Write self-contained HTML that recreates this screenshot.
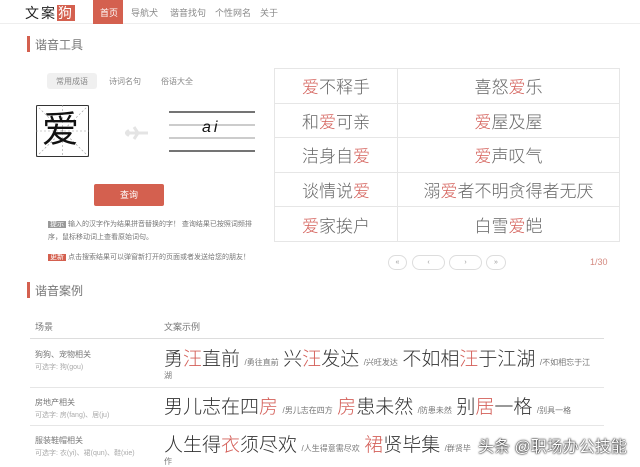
<!DOCTYPE html>
<html><head><meta charset="utf-8"><style>
*{margin:0;padding:0;box-sizing:border-box}
body{width:640px;height:467px;overflow:hidden;background:#fff;font-family:"Liberation Sans","Noto Sans CJK SC",sans-serif;color:#555;position:relative}
.a{position:absolute;white-space:nowrap}
.r{color:#d4605a}
.hdr{left:0;top:0;width:640px;height:24px;border-bottom:1px solid #eee}
.nav{font-size:9px;color:#888;top:6px}
table{border-collapse:collapse}
.t td{border:1px solid #e6e6e6;height:34.6px;font-size:17px;color:#666;text-align:center;font-weight:300}
.pb{top:255px;height:15px;border:1px solid #ddd;border-radius:8px;font-size:7px;color:#999;text-align:center;line-height:13px}
.big{font-size:19px;color:#333;font-weight:300}
.sm{font-size:8px;color:#777}
</style></head><body>
<div class="a hdr"></div>
<div class="a" style="left:25px;top:3px;font-size:14px;color:#222;letter-spacing:2px">文案<span style="background:#d4604f;color:#fff;padding:0 1px">狗</span></div>
<div class="a" style="left:93px;top:0;width:30px;height:24px;background:#d4604f"></div>
<div class="a nav" style="left:100px;color:#fff">首页</div>
<div class="a nav" style="left:131px">导航犬</div>
<div class="a nav" style="left:170px">谐音找句</div>
<div class="a nav" style="left:215px">个性网名</div>
<div class="a nav" style="left:260px">关于</div>

<div class="a" style="left:27px;top:36px;width:3px;height:16px;background:#d4604f"></div>
<div class="a" style="left:35px;top:36px;font-size:12px;color:#777">谐音工具</div>

<div class="a" style="left:47px;top:73px;width:50px;height:16px;background:#f0f0f0;border-radius:3px"></div>
<div class="a" style="left:56px;top:76px;font-size:8px;color:#888">常用成语</div>
<div class="a" style="left:109px;top:76px;font-size:8px;color:#888">诗词名句</div>
<div class="a" style="left:161px;top:76px;font-size:8px;color:#888">俗语大全</div>

<svg class="a" style="left:36px;top:105px" width="53" height="52"><rect x="0.5" y="0.5" width="52" height="51" fill="none" stroke="#333"/><path d="M0 0L53 52M53 0L0 52M26.5 0V52M0 26H53" stroke="#999" stroke-dasharray="2,2" stroke-width=".6"/></svg>
<div class="a" style="left:42px;top:104px;font-size:37px;color:#111;line-height:52px">爱</div>
<svg class="a" style="left:124px;top:126px" width="26" height="14"><path d="M1 7H24M10 1L14 7L10 13M3 4L5 7L3 10" stroke="#e4e4e4" stroke-width="3" fill="none"/></svg>
<svg class="a" style="left:169px;top:110px" width="86" height="44"><path d="M0 2H86M0 41H86" stroke="#222" stroke-width="1.2"/><path d="M0 15H86M0 28H86" stroke="#999"/></svg>
<div class="a" style="left:202px;top:119px;font-size:16px;font-style:italic;color:#111;letter-spacing:3px">ai</div>

<div class="a" style="left:94px;top:184px;width:70px;height:22px;background:#d4604f;border-radius:2px;color:#fff;font-size:9px;text-align:center;line-height:22px">查询</div>
<div class="a" style="left:48px;top:218px;font-size:7px;color:#777;line-height:13px;white-space:normal;width:212px"><span style="background:#999;color:#fff;padding:0 2px">提示</span> 输入的汉字作为结果拼音替换的字！ 查询结果已按照词频排序，鼠标移动词上查看原始词句。</div>
<div class="a" style="left:48px;top:252px;font-size:7px;color:#777"><span style="background:#d4604f;color:#fff;padding:0 2px">更新</span> 点击搜索结果可以弹窗新打开的页面或者发送给您的朋友！</div>

<table class="a t" style="left:274px;top:68px;width:346px">
<tr><td style="width:123px"><span class="r">爱</span>不释手</td><td>喜怒<span class="r">爱</span>乐</td></tr>
<tr><td>和<span class="r">爱</span>可亲</td><td><span class="r">爱</span>屋及屋</td></tr>
<tr><td>洁身自<span class="r">爱</span></td><td><span class="r">爱</span>声叹气</td></tr>
<tr><td>谈情说<span class="r">爱</span></td><td>溺<span class="r">爱</span>者不明贪得者无厌</td></tr>
<tr><td><span class="r">爱</span>家挨户</td><td>白雪<span class="r">爱</span>皑</td></tr>
</table>
<div class="a pb" style="left:388px;width:19px">«</div>
<div class="a pb" style="left:412px;width:33px">‹</div>
<div class="a pb" style="left:449px;width:33px">›</div>
<div class="a pb" style="left:486px;width:20px">»</div>
<div class="a" style="left:590px;top:257px;font-size:9px;color:#d48a80">1/30</div>

<div class="a" style="left:27px;top:282px;width:3px;height:16px;background:#d4604f"></div>
<div class="a" style="left:35px;top:282px;font-size:12px;color:#777">谐音案例</div>

<div class="a" style="left:35px;top:320px;font-size:9px;color:#777">场景</div>
<div class="a" style="left:164px;top:320px;font-size:9px;color:#777">文案示例</div>
<div class="a" style="left:30px;top:338px;width:574px;height:1px;background:#ddd"></div>
<div class="a" style="left:35px;top:349px;font-size:8px;color:#777">狗狗、宠物相关</div>
<div class="a" style="left:35px;top:362px;font-size:7px;color:#aaa">可选字: 狗(gou)</div>
<div class="a" style="left:164px;top:344px"><span class="big">勇<span class="r">汪</span>直前</span> <span class="sm">/勇往直前</span> <span class="big">兴<span class="r">汪</span>发达</span> <span class="sm">/兴旺发达</span> <span class="big">不如相<span class="r">汪</span>于江湖</span> <span class="sm">/不如相忘于江</span></div>
<div class="a sm" style="left:164px;top:370px">湖</div>
<div class="a" style="left:30px;top:387px;width:574px;height:1px;background:#e6e6e6"></div>
<div class="a" style="left:35px;top:397px;font-size:8px;color:#777">房地产相关</div>
<div class="a" style="left:35px;top:410px;font-size:7px;color:#aaa">可选字: 房(fang)、居(ju)</div>
<div class="a" style="left:164px;top:392px"><span class="big">男儿志在四<span class="r">房</span></span> <span class="sm">/男儿志在四方</span> <span class="big"><span class="r">房</span>患未然</span> <span class="sm">/防患未然</span> <span class="big">别<span class="r">居</span>一格</span> <span class="sm">/别具一格</span></div>
<div class="a" style="left:30px;top:425px;width:574px;height:1px;background:#e6e6e6"></div>
<div class="a" style="left:35px;top:435px;font-size:8px;color:#777">服装鞋帽相关</div>
<div class="a" style="left:35px;top:448px;font-size:7px;color:#aaa">可选字: 衣(yi)、裙(qun)、鞋(xie)</div>
<div class="a" style="left:164px;top:430px"><span class="big">人生得<span class="r">衣</span>须尽欢</span> <span class="sm">/人生得意需尽欢</span> <span class="big"><span class="r">裙</span>贤毕集</span> <span class="sm">/群贤毕</span></div>
<div class="a sm" style="left:164px;top:456px">作</div>
<div class="a" style="left:478px;top:433px;font-size:16px;color:#fff;text-shadow:0 0 2px #000,0 0 1px #000">头条 @职场办公技能</div>
</body></html>
